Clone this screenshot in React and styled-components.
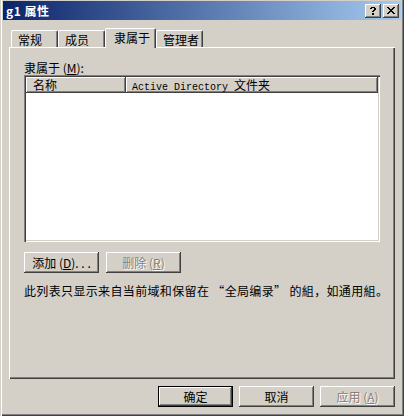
import styled, { createGlobalStyle, css } from "styled-components";

const GlobalStyle = createGlobalStyle`
  body {
    margin: 0;
    background: #d4d0c8;
  }
  * {
    box-sizing: border-box;
  }
`;

const bevel = css`
  box-shadow: inset -1px -1px #404040, inset 1px 1px #fff,
    inset -2px -2px #808080, inset 2px 2px #d4d0c8;
`;

const Window = styled.div`
  width: 404px;
  height: 416px;
  background: #d4d0c8;
  padding: 1px 3px 3px;
  display: flex;
  flex-direction: column;
  font-family: "Noto Sans CJK SC", "Liberation Sans", sans-serif;
  font-size: 12px;
  color: #000;
  box-shadow: inset 1px 0 #d4d0c8, inset 2px 0 #fff, inset -1px -1px #404040,
    inset -2px -2px #808080;
`;

const TitleBar = styled.div`
  height: 19px;
  display: flex;
  align-items: center;
  gap: 2px;
  padding: 0 2px 0 3px;
  background: linear-gradient(to right, #0a246a, #a6caf0);
`;

const TitleText = styled.div`
  flex: 1;
  color: #fff;
  font-weight: bold;
  font-size: 12px;
  line-height: 19px;
  letter-spacing: 0.5px;
`;

const CaptionButton = styled.div`
  width: 16px;
  height: 14px;
  background: #d4d0c8;
  display: flex;
  ${bevel}

  svg {
    display: block;
  }
`;

const Body = styled.div`
  flex: 1;
  display: flex;
  flex-direction: column;
  padding: 8px 6px 6px;
`;

const TabStrip = styled.div`
  height: 19px;
  display: flex;
  align-items: flex-end;
  padding-left: 2px;
`;

const Tab = styled.div`
  width: ${(p) => p.$w}px;
  height: ${(p) => (p.$active ? 20 : 17)}px;
  margin-bottom: ${(p) => (p.$active ? -1 : 0)}px;
  padding: ${(p) => (p.$active ? "2px 0 0 8px" : "2px 0 0 6px")};
  line-height: 14px;
  background: #d4d0c8;
  border-top: 1px solid #fff;
  border-left: 1px solid #fff;
  border-right: 1px solid #404040;
  border-radius: 2px 2px 0 0;
  box-shadow: inset -1px 0 #808080;
  position: relative;
  z-index: ${(p) => (p.$active ? 1 : 0)};
  white-space: nowrap;
`;

const Panel = styled.div`
  flex: 1;
  min-height: 0;
  padding: 14px 15px 0;
  display: flex;
  flex-direction: column;
  box-shadow: inset 1px 1px #fff, inset -1px -1px #404040,
    inset -2px -2px #808080;
`;

const Label = styled.div`
  height: 14px;
  line-height: 14px;
`;

const ListBox = styled.div`
  height: 167px;
  background: #fff;
  padding: 2px;
  box-shadow: inset 1px 1px #808080, inset 2px 2px #404040,
    inset -1px -1px #fff, inset -2px -2px #d4d0c8;
`;

const Header = styled.div`
  display: flex;
  height: 16px;
`;

const HeaderCell = styled.div`
  ${(p) => (p.$w ? `width: ${p.$w}px;` : "flex: 1;")}
  height: 16px;
  line-height: 15px;
  padding-left: ${(p) => p.$pad}px;
  background: #d4d0c8;
  white-space: nowrap;
  box-shadow: inset -1px -1px #404040, inset 1px 1px #fff,
    inset -2px -2px #808080;
`;

const Mono = styled.span`
  font-family: "Liberation Mono", monospace;
  font-size: 10px;
`;

const ButtonRow = styled.div`
  display: flex;
  gap: 7px;
  margin-top: 10px;
`;

const Button = styled.div`
  width: 75px;
  height: 21px;
  display: flex;
  align-items: center;
  justify-content: center;
  line-height: 14px;
  background: #d4d0c8;
  white-space: nowrap;
  color: ${(p) => (p.$disabled ? "#808080" : "#000")};
  text-shadow: ${(p) => (p.$disabled ? "1px 1px 0 #fff" : "none")};
  ${(p) =>
    p.$default
      ? css`
          border: 1px solid #000;
          box-shadow: inset -1px -1px #404040, inset 1px 1px #fff,
            inset -2px -2px #808080;
        `
      : bevel}

  u {
    text-decoration-thickness: 1px;
  }
`;

const Note = styled.div`
  margin-top: 11px;
  line-height: 14px;
  letter-spacing: 0.35px;
  white-space: nowrap;
`;

const Footer = styled.div`
  display: flex;
  justify-content: flex-end;
  gap: 6px;
  margin-top: 7px;
`;

const toPath = (rows) =>
  rows
    .flatMap((r, y) =>
      [...r].map((c, x) => (c === "#" ? `M${x} ${y}h1v1h-1z` : ""))
    )
    .join("");

const CLOSE = [
  "##....##",
  ".##..##.",
  "..####..",
  "...##...",
  "..####..",
  ".##..##.",
  "##....##",
];

const HELP = [
  ".####.",
  "##..##",
  "....##",
  "...##.",
  "..##..",
  "......",
  "..##..",
  "..##..",
];

function Glyph({ rows, x, y }) {
  return (
    <svg width="16" height="14" viewBox="0 0 16 14">
      <path d={toPath(rows)} transform={`translate(${x} ${y})`} fill="#000" />
    </svg>
  );
}

const tabs = [
  { label: "常规", w: 47 },
  { label: "成员", w: 47 },
  { label: "隶属于", w: 51, active: true },
  { label: "管理者", w: 47 },
];

export default function App() {
  return (
    <>
      <GlobalStyle />
      <Window>
        <TitleBar>
          <TitleText>g1 属性</TitleText>
          <CaptionButton>
            <Glyph rows={HELP} x={5} y={3} />
          </CaptionButton>
          <CaptionButton>
            <Glyph rows={CLOSE} x={4} y={3} />
          </CaptionButton>
        </TitleBar>
        <Body>
          <TabStrip>
            {tabs.map((t) => (
              <Tab key={t.label} $w={t.w} $active={t.active}>
                {t.label}
              </Tab>
            ))}
          </TabStrip>
          <Panel>
            <Label>
              隶属于 (<u>M</u>):
            </Label>
            <ListBox>
              <Header>
                <HeaderCell $w={100} $pad={7}>
                  名称
                </HeaderCell>
                <HeaderCell $pad={6}>
                  <Mono>Active Directory </Mono>文件夹
                </HeaderCell>
              </Header>
            </ListBox>
            <ButtonRow>
              <Button>
                添加 (<u>D</u>). . .
              </Button>
              <Button $disabled>
                删除 (<u>R</u>)
              </Button>
            </ButtonRow>
            <Note>此列表只显示来自当前域和保留在 “全局编录” 的組，如通用組。</Note>
          </Panel>
          <Footer>
            <Button $default>确定</Button>
            <Button>取消</Button>
            <Button $disabled>
              应用 (<u>A</u>)
            </Button>
          </Footer>
        </Body>
      </Window>
    </>
  );
}
